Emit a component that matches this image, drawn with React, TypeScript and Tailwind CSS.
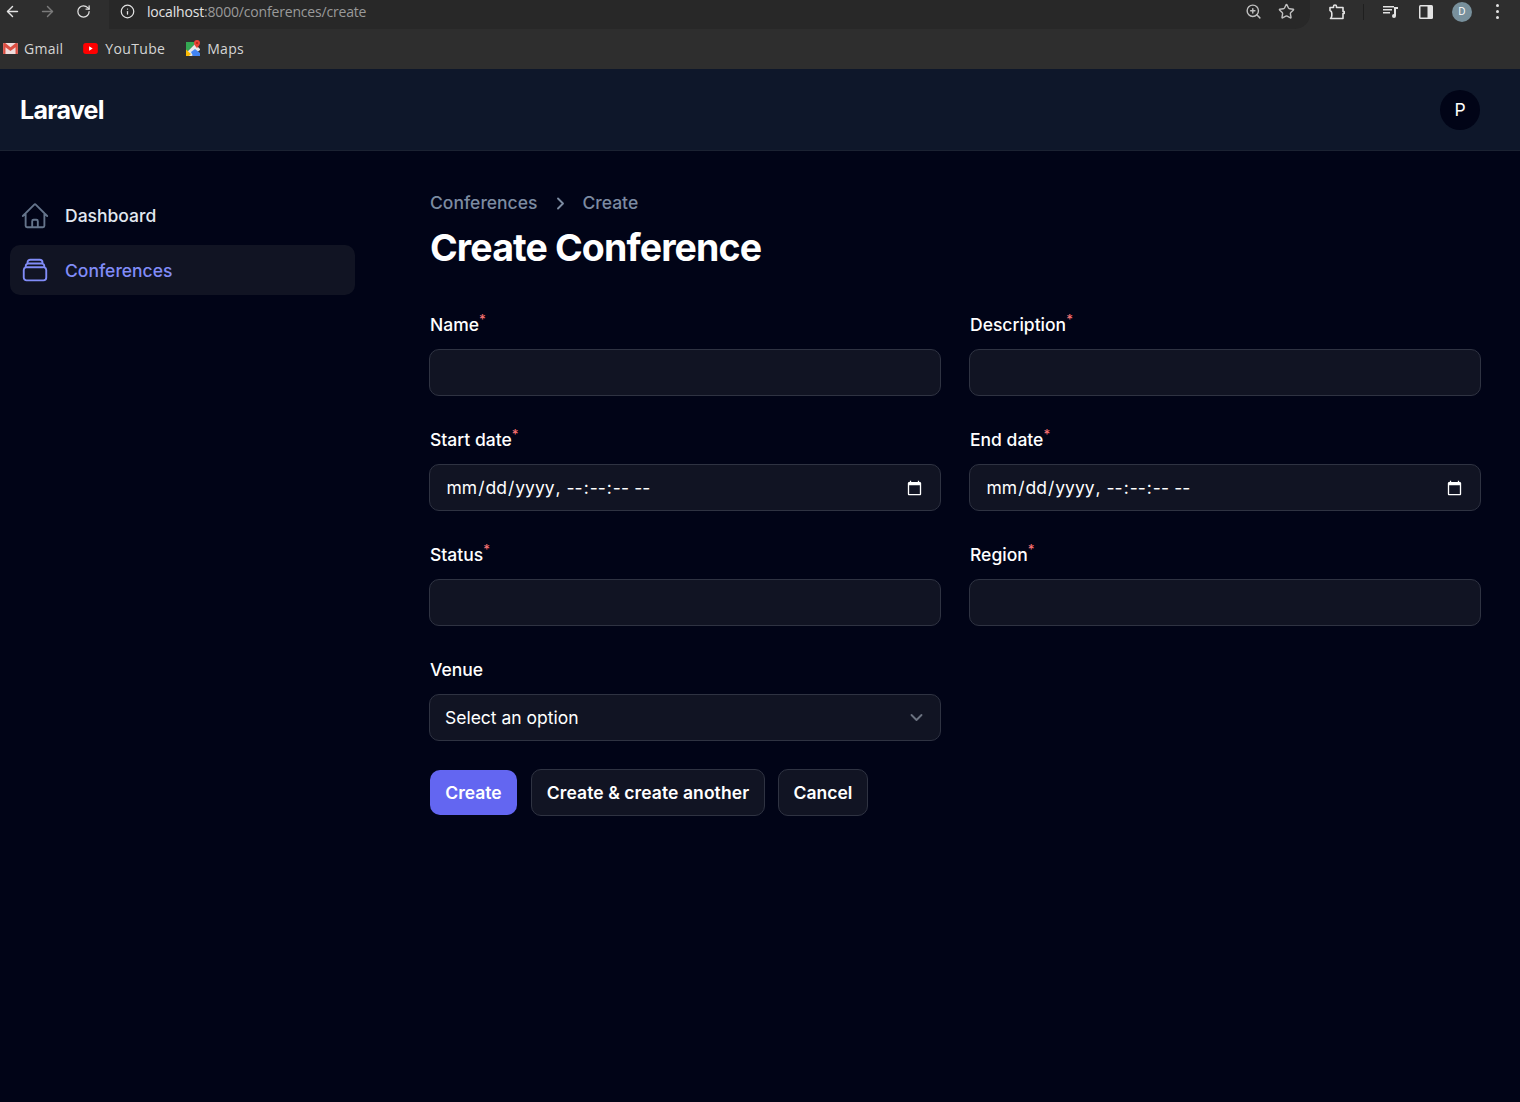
import { ArrowLeft, ArrowRight, Info, RotateCw, Star, ZoomIn } from "lucide-react";

const HomeIcon = () => (
  <svg viewBox="0 0 24 24" fill="none" stroke="#64748b" strokeWidth={1.5} strokeLinecap="round" strokeLinejoin="round" className="h-[30px] w-[30px]">
    <path d="M2.25 12l8.954-8.955c.44-.439 1.152-.439 1.591 0L21.75 12M4.5 9.75v10.125c0 .621.504 1.125 1.125 1.125H9.75v-4.875c0-.621.504-1.125 1.125-1.125h2.25c.621 0 1.125.504 1.125 1.125V21h4.125c.621 0 1.125-.504 1.125-1.125V9.75M8.25 21h8.25" />
  </svg>
);

const StackIcon = () => (
  <svg viewBox="0 0 24 24" fill="none" stroke="#818cf8" strokeWidth={1.5} strokeLinecap="round" strokeLinejoin="round" className="h-[30px] w-[30px]">
    <path d="M6 6.878V6a2.25 2.25 0 012.25-2.25h7.5A2.25 2.25 0 0118 6v.878m-12 0c.235-.083.487-.128.75-.128h10.5c.263 0 .515.045.75.128m-12 0A2.251 2.251 0 004.5 9v.878m13.5-3A2.251 2.251 0 0119.5 9v.878m0 0a2.246 2.246 0 00-.75-.128H5.25c-.263 0-.515.045-.75.128m15 0A2.25 2.25 0 0121 12v6a2.25 2.25 0 01-2.25 2.25H5.25A2.25 2.25 0 013 18v-6c0-.98.626-1.813 1.5-2.122" />
  </svg>
);

const GmailIcon = () => (
  <svg viewBox="0 0 16 12" className="h-[11px] w-[15px]">
    <rect width="16" height="12" rx="1" fill="#efdcdc" />
    <path d="M0 1.500V12h2.500V4.500L8 8.600l5.500-4.100V12H16V1.500C16 0 14.500-.4 13.400.4L8 4.500 2.600.4C1.500-.4 0 0 0 1.500z" fill="#dc4f43" />
  </svg>
);

const YoutubeIcon = () => (
  <svg viewBox="0 0 16 12" className="h-[11px] w-[15px]">
    <rect width="16" height="12" rx="3" fill="#ff0000" />
    <path d="M6.500 3.600v4.800L10.400 6z" fill="#fff" />
  </svg>
);

const MapsIcon = () => (
  <svg viewBox="0 0 16 16" className="h-[16px] w-[16px]">
    <path d="M1 2h9v2L1 13z" fill="#34a853" />
    <path d="M1 13L10 4l5 5v1L7 16H1z" fill="#e8e8e8" />
    <path d="M1 9.500L6 14l-2 2H1z" fill="#fbbc04" />
    <path d="M6 12l4-3 5 4v3H8z" fill="#4285f4" />
    <path d="M12 0a3 3 0 00-3 3c0 2.200 3 5 3 5s3-2.800 3-5a3 3 0 00-3-3z" fill="#ea4335" />
    <circle cx="12" cy="3" r="1" fill="#a52714" />
  </svg>
);

const BrowserBar = () => (
  <div className="h-[69px] bg-[#2e2e2e] font-['Open_Sans',sans-serif]">
    <div className="flex h-[29px] items-center">
      <div className="flex w-[109px] items-center pb-[6px] pl-[4px] text-[#e3e3e3]">
        <ArrowLeft size={17} strokeWidth={2} />
        <ArrowRight size={17} strokeWidth={2} className="ml-[18px] text-[#7b7b7b]" />
        <RotateCw size={15} strokeWidth={2} className="ml-[20px]" />
      </div>
      <div className="flex h-[29px] w-[1201px] items-center rounded-br-[15px] bg-[#282828] pr-[15px] pb-[6px]">
        <div className="flex w-[37px] justify-center text-[#e3e3e3]">
          <Info size={15} strokeWidth={2} />
        </div>
        <div className="ml-px flex-1 text-[14px] tracking-[-0.18px] text-[#e3e3e3]">
          localhost<span className="text-[#9a9a9a]">:8000/conferences/create</span>
        </div>
        <ZoomIn size={17} strokeWidth={2} className="-translate-x-[1px] text-[#c0c0c0]" />
        <Star size={17} strokeWidth={2} className="ml-[15px] text-[#c0c0c0]" />
      </div>
      <div className="ml-[19px] flex flex-1 items-center pb-[6px] text-[#e3e3e3]">
        <svg viewBox="0 0 16 16" fill="none" stroke="currentColor" strokeWidth={1.6} strokeLinejoin="round" className="h-[16px] w-[16px]">
          <path d="M1 3.500h3.500V2.500a1.500 1.500 0 013 0v1H14v4h1.200v2H14v5H1.500a4 4 0 001.300-2.800V9A3 3 0 001 6.500z" />
        </svg>
        <div className="ml-[18px] h-[16px] w-px bg-[#1f1f1f]" />
        <svg viewBox="0 0 16 16" fill="currentColor" className="ml-[19px] h-[16px] w-[16px]">
          <path d="M0 2h11v1.500H0zM0 5h9v1.500H0zM0 8h7v1.500H0zM11 3h4v2h-2v7a2 2 0 11-2-2z" />
        </svg>
        <svg viewBox="0 0 16 16" className="ml-[19px] h-[16px] w-[16px]">
          <rect x="1" y="1" width="14" height="14" rx="1.500" fill="#e3e3e3" />
          <rect x="2.500" y="2.500" width="7" height="11" fill="#2e2e2e" />
        </svg>
        <div className="ml-[18px] flex h-[20px] w-[20px] items-center justify-center rounded-full bg-[#78909c] text-[10px] text-white">
          D
        </div>
        <div className="ml-[24px] flex flex-col gap-[3px]">
          <div className="h-[3px] w-[3px] rounded-full bg-[#e3e3e3]" />
          <div className="h-[3px] w-[3px] rounded-full bg-[#e3e3e3]" />
          <div className="h-[3px] w-[3px] rounded-full bg-[#e3e3e3]" />
        </div>
      </div>
    </div>
    <div className="flex h-[40px] items-center pb-[2px] pl-[3px] text-[14px] tracking-[0.25px] text-[#d5d5d5]">
      <div className="flex items-center gap-[6px]">
        <GmailIcon />
        <span>Gmail</span>
      </div>
      <div className="ml-[20px] flex items-center gap-[7px]">
        <YoutubeIcon />
        <span className="tracking-[0.35px]">YouTube</span>
      </div>
      <div className="ml-[20px] flex items-center gap-[6px]">
        <MapsIcon />
        <span>Maps</span>
      </div>
    </div>
  </div>
);

const Label = ({ text, required = true }: { text: string; required?: boolean }) => (
  <div className="mb-[11px] h-[26px] text-[17.5px] leading-[26px] font-medium text-white">
    {text}
    {required && <sup className="text-[#f87171]">*</sup>}
  </div>
);

const fieldClass =
  "h-[47px] w-full rounded-[10px] border border-[#2f3342] bg-[#111423] px-[16px] text-[17.5px] text-white outline-none";

const TextField = ({ label }: { label: string }) => (
  <div>
    <Label text={label} />
    <div className="-mx-px">
      <input type="text" className={fieldClass} />
    </div>
  </div>
);

const DateField = ({ label }: { label: string }) => (
  <div>
    <Label text={label} />
    <div className="-mx-px">
      <input type="datetime-local" step={1} className={fieldClass + " pt-[2px] pr-[15px] pl-[15.5px] [color-scheme:dark]"} />
    </div>
  </div>
);

const Sidebar = () => (
  <aside className="w-[365px] shrink-0 pt-[40px] pl-[10px]">
    <div className="flex h-[50px] w-[345px] items-center gap-[15px] rounded-[10px] px-[10px] text-[17.5px] font-medium text-[#e2e8f0]">
      <HomeIcon />
      <span>Dashboard</span>
    </div>
    <div className="mt-[4px] flex h-[50px] w-[345px] items-center gap-[15px] rounded-[10px] bg-[#111423] px-[10px] text-[17.5px] font-medium text-[#818cf8]">
      <StackIcon />
      <span className="pt-[2px]">Conferences</span>
    </div>
  </aside>
);

export default function App() {
  return (
    <div className="flex min-h-[1102px] flex-col bg-[#010417] font-['Inter',sans-serif]">
      <BrowserBar />
      <header className="flex h-[82px] items-center justify-between border-b border-[#1b2232] bg-[#0e172a] px-[20px] pr-[40px]">
        <div className="pt-[2px] text-[25px] font-bold tracking-[-0.7px] text-white">Laravel</div>
        <div className="flex h-[40px] w-[40px] items-center justify-center rounded-full bg-[#010417] pt-[2px] text-[17.5px] text-white">
          P
        </div>
      </header>
      <div className="flex flex-1">
        <Sidebar />
        <main className="flex-1 pt-[40px] pr-[40px] pl-[65px]">
          <nav className="flex h-[24px] items-center text-[17.5px] font-medium text-[#7c8ba1]">
            <span>Conferences</span>
            <svg viewBox="0 0 20 20" fill="none" stroke="currentColor" strokeWidth={1.5} className="mx-[10px] h-[25px] w-[25px] translate-x-[1px]">
              <path d="M8 6l4 4-4 4" strokeLinecap="round" strokeLinejoin="round" />
            </svg>
            <span>Create</span>
          </nav>
          <h1 className="mt-[8px] text-[37.5px] leading-[50px] font-bold tracking-[-0.88px] text-white">
            Create Conference
          </h1>
          <form className="mt-[39px]">
            <div className="grid grid-cols-2 gap-x-[30px] gap-y-[31px]">
              <TextField label="Name" />
              <TextField label="Description" />
              <DateField label="Start date" />
              <DateField label="End date" />
              <TextField label="Status" />
              <TextField label="Region" />
              <div>
                <Label text="Venue" required={false} />
                <div className="-mx-px flex h-[47px] items-center rounded-[10px] border border-[#2f3342] bg-[#111423] pr-[11px]">
                  <select className="h-full flex-1 appearance-none bg-transparent pt-[2px] pl-[15px] text-[17.5px] text-white outline-none">
                    <option>Select an option</option>
                  </select>
                  <svg viewBox="0 0 20 20" fill="none" stroke="#6b7280" strokeWidth={1.5} className="h-[25px] w-[25px]">
                    <path d="M6 8l4 4 4-4" strokeLinecap="round" strokeLinejoin="round" />
                  </svg>
                </div>
              </div>
            </div>
            <div className="mt-[28px] flex items-center">
              <button type="button" className="h-[45px] w-[87px] rounded-[10px] bg-[#6366f1] pt-[1px] text-[17.5px] font-semibold text-white">
                Create
              </button>
              <button type="button" className="ml-[14px] h-[47px] w-[234px] rounded-[10px] border border-[#2f3342] bg-[#111423] pt-[1px] text-[17.5px] font-semibold tracking-[0.08px] text-white">
                Create &amp; create another
              </button>
              <button type="button" className="ml-[13px] h-[47px] w-[90px] rounded-[10px] border border-[#2f3342] bg-[#111423] pt-[1px] text-[17.5px] font-semibold text-white">
                Cancel
              </button>
            </div>
          </form>
        </main>
      </div>
    </div>
  );
}
